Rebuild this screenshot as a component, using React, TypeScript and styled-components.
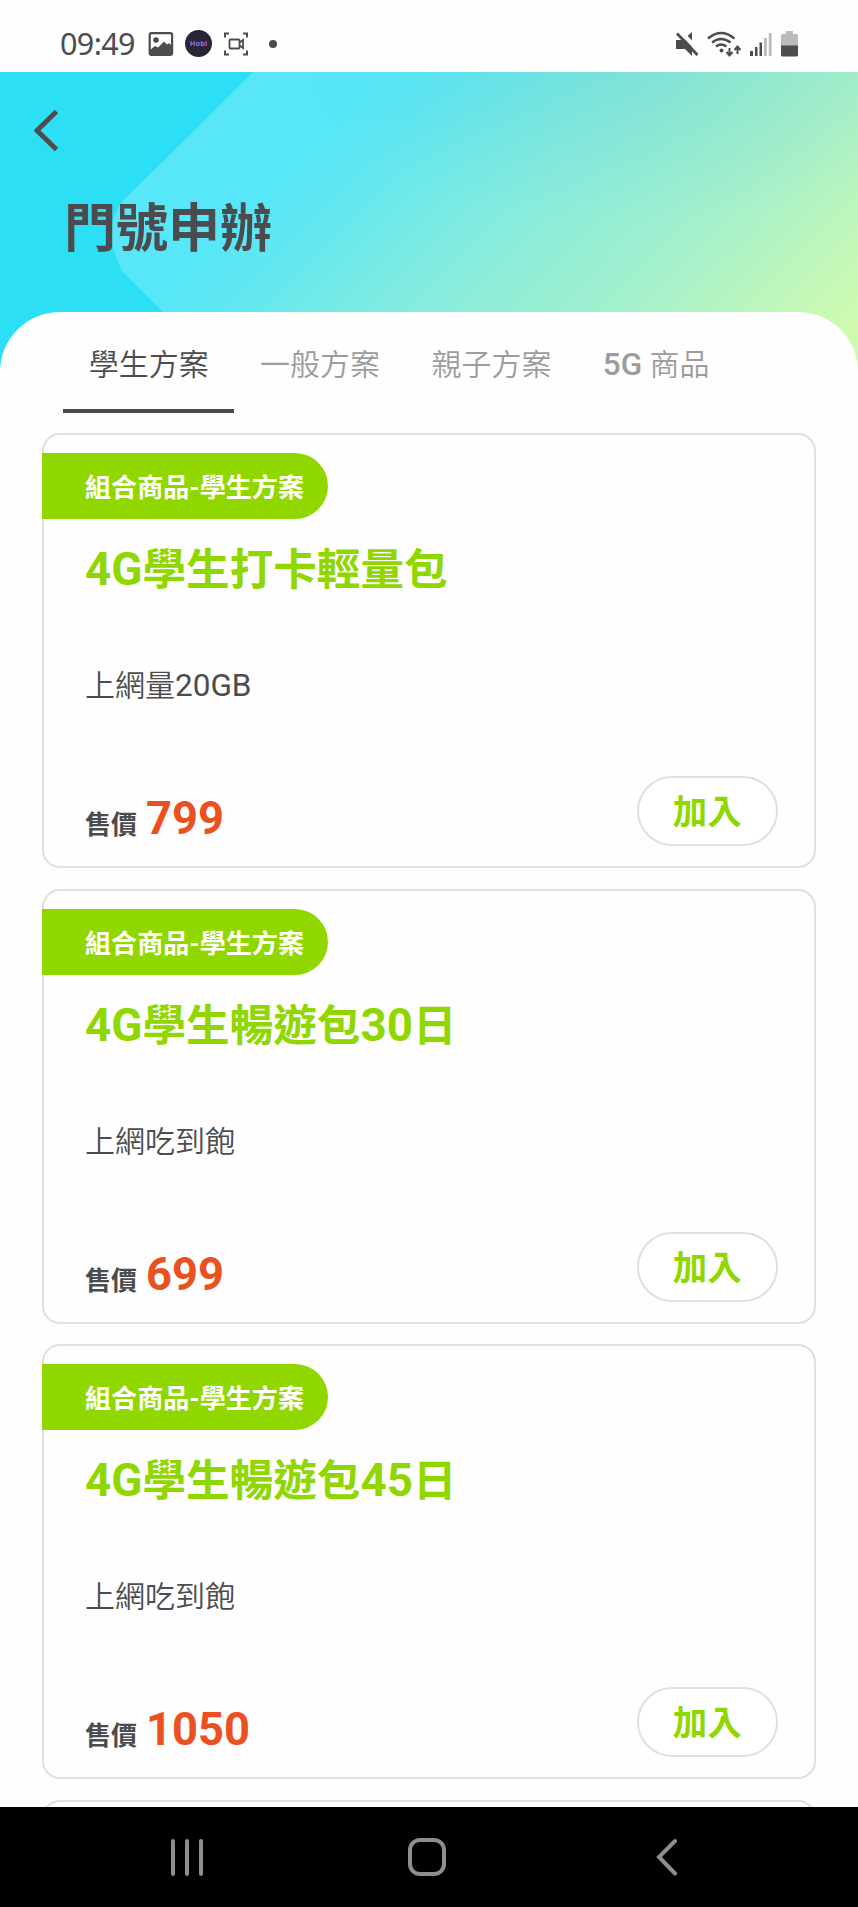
import React from "react";
import styled, { createGlobalStyle } from "styled-components";

const GlobalStyle = createGlobalStyle`
  * { box-sizing: border-box; }
  body { margin: 0; background: #fff; }
`;

const ink = "#4c4c4e";
const green = "#90d700";
const line = "#e0e0e0";

const Screen = styled.div`
  width: 858px;
  height: 1907px;
  display: flex;
  flex-direction: column;
  overflow: hidden;
  background: #fefefe;
  color: ${ink};
  font-family: Roboto, "Noto Sans CJK TC", sans-serif;
`;

const StatusBar = styled.div`
  height: 72px;
  flex: none;
  display: flex;
  align-items: center;
  justify-content: space-between;
  padding: 15px 60px 0 60px;
`;

const Clock = styled.span`
  width: 88px;
  margin-top: -2px;
  font: 400 30.5px/32px "Noto Sans", sans-serif;
  letter-spacing: -0.6px;
`;

const StatusGroup = styled.div<{ $gap?: number }>`
  display: flex;
  align-items: center;
  gap: ${(p) => p.$gap ?? 0}px;
`;

const AppBadge = styled.span`
  width: 27px;
  height: 27px;
  margin: 0 12px 0 11px;
  border-radius: 50%;
  display: grid;
  place-items: center;
  background: #262636;
  color: #a267e0;
  font: 700 7.5px/1 "Noto Sans", sans-serif;
`;

const Dot = styled.span`
  width: 8px;
  height: 8px;
  margin-left: 21px;
  border-radius: 50%;
  background: ${ink};
`;

const Hero = styled.header`
  position: relative;
  height: 310px;
  flex: none;
  padding: 37px 34px 0;
`;

const HeroArt = styled.svg`
  position: absolute;
  inset: 0;
`;

const BackButton = styled.button`
  position: relative;
  display: block;
  width: 26px;
  height: 43px;
  padding: 0;
  border: 0;
  background: none;
`;

const PageTitle = styled.h1`
  position: relative;
  margin: 40px 0 0 30px;
  font-size: 52px;
  line-height: 76px;
  font-weight: 700;
`;

const Sheet = styled.main`
  position: relative;
  flex: 1;
  min-height: 0;
  margin-top: -70px;
  padding: 0 42px;
  overflow: hidden;
  border-radius: 60px 60px 0 0;
  background: #fefefe;
`;

const Tabs = styled.nav`
  display: flex;
  height: 101px;
  padding-left: 21px;
`;

const Tab = styled.button<{ $active?: boolean }>`
  padding: 8px 25.7px 0;
  border: 0;
  border-bottom: 4px solid ${(p) => (p.$active ? ink : "transparent")};
  background: none;
  color: ${(p) => (p.$active ? ink : "#9c9c9c")};
  font: 350 30px/44px Roboto, "Noto Sans CJK TC", sans-serif;
  white-space: pre;
`;

const TabStrong = styled.span`
  font-size: 1.05em;
  font-weight: 500;
`;

const Latin = styled.span`
  font-size: 1.05em;
`;

const PlanList = styled.div`
  display: flex;
  flex-direction: column;
  gap: 20.5px;
  padding-top: 20.3px;
`;

const Card = styled.article`
  height: 435px;
  flex: none;
  display: flex;
  flex-direction: column;
  align-items: flex-start;
  padding: 18px 36px 20px 0;
  border: 2px solid ${line};
  border-radius: 18px;
`;

const Category = styled.span`
  height: 66px;
  margin-left: -2px;
  padding: 2px 24px 0 43px;
  border-radius: 0 33px 33px 0;
  background: ${green};
  color: #fff;
  font-size: 26.1px;
  font-weight: 700;
  line-height: 66px;
`;

const PlanName = styled.h2`
  margin: 21px 0 0 41px;
  color: ${green};
  font-size: 43.6px;
  line-height: 60px;
  font-weight: 700;
`;

const PlanDetail = styled.p`
  margin: 63px 0 0 41px;
  font-size: 30px;
  line-height: 44px;
  font-weight: 350;

  ${Latin} {
    font-weight: 400;
  }
`;

const CardFooter = styled.div`
  align-self: stretch;
  margin-top: auto;
  display: flex;
  align-items: flex-end;
  justify-content: space-between;
  padding-left: 41px;
`;

const Price = styled.div`
  display: flex;
  align-items: baseline;
  gap: 9px;
  margin-bottom: -6px;
  line-height: 54px;
  font-size: 26px;
  font-weight: 700;
`;

const Amount = styled.strong`
  color: #eb5020;
  font-size: 45.3px;
  font-weight: 700;
`;

const AddButton = styled.button`
  width: 141.5px;
  height: 70px;
  padding-top: 3px;
  border: 2.5px solid ${line};
  border-radius: 35px;
  background: #fff;
  color: ${green};
  font: 700 34.5px/50px Roboto, "Noto Sans CJK TC", sans-serif;
`;

const NavBar = styled.footer`
  height: 100px;
  flex: none;
  display: flex;
  align-items: center;
  padding-left: 170px;
  background: #000;
`;

const HomeIcon = styled.svg`
  margin: 0 210px 0 203.5px;
`;

const plans = [
  { name: "4G學生打卡輕量包", detail: "上網量20GB", price: "799" },
  { name: "4G學生暢遊包30日", detail: "上網吃到飽", price: "699" },
  { name: "4G學生暢遊包45日", detail: "上網吃到飽", price: "1050" },
];

/* Latin letters and digits sit slightly larger than the Chinese text around them. */
const MixedText = ({ text }: { text: string }) => (
  <>
    {text.split(/([A-Za-z0-9-]+)/).map((part, i) =>
      i % 2 ? <Latin key={i}>{part}</Latin> : part
    )}
  </>
);

const PictureIcon = () => (
  <svg width="26" height="26" viewBox="0 0 26 26">
    <rect x="1.7" y="2.2" width="22.4" height="21.6" rx="1.8" fill="none" stroke={ink} strokeWidth="2.2" />
    <circle cx="8" cy="9" r="2.8" fill={ink} />
    <path d="M2 19l5-4 3 1.500 6-6 3 3 2-1.500 3 3V24H2z" fill={ink} />
  </svg>
);

const RecordIcon = () => (
  <svg width="24" height="26" viewBox="0 0 24 26" fill="none" stroke={ink}>
    <path d="M1 6.500V2.500h4M19 2.500h4v4M23 19.500v4h-4M5 23.500H1v-4" strokeWidth="2" />
    <rect x="5.500" y="8.500" width="10" height="9" rx="1" strokeWidth="1.800" />
    <path d="M15.500 11.500l3.500-2.500v8l-3.500-2.500" strokeWidth="1.800" />
  </svg>
);

const MuteIcon = () => (
  <svg width="24" height="28" viewBox="0 0 24 28" fill={ink}>
    <path d="M1 10h7l9-8v24l-7-7H1z" />
    <path d="M4 0L22 19" stroke="#fefefe" strokeWidth="4.500" />
    <path d="M2 3.500L22.500 25" stroke={ink} strokeWidth="2.800" />
  </svg>
);

const WifiIcon = () => (
  <svg width="34" height="28" viewBox="0 0 34 28" fill="none" stroke={ink} strokeWidth="2.400">
    <path d="M1 8.500Q14 -2.500 27.500 8.500M5 12.500Q14 5.500 23.500 12.500M9 16.500Q14 12.500 19.500 16.500" />
    <circle cx="14.500" cy="20.500" r="2" fill={ink} stroke="none" />
    <path d="M22.500 18v7M19.500 22l3 3.500 3-3.500M30.500 24v-7M27.500 20l3-3.500 3 3.500" strokeWidth="2" />
  </svg>
);

const SignalIcon = () => (
  <svg width="23" height="28" viewBox="0 0 23 28">
    <path d="M0 21h3v5H0zM5 17h2.500v9H5zM9.500 12.500h2.500V26H9.500z" fill={ink} />
    <path d="M14 8h2.800v18H14zM18.800 3h2.800v23h-2.800z" fill="#bbb" />
  </svg>
);

const BatteryIcon = () => (
  <svg width="17" height="28" viewBox="0 0 17 28">
    <path d="M5 1h7v3h3.500a1.500 1.500 0 0 1 1.500 1.500V16H0V5.500A1.500 1.500 0 0 1 1.500 4H5z" fill="#bbb" />
    <path d="M0 15.500h17V25a1.500 1.500 0 0 1-1.500 1.500h-14A1.500 1.500 0 0 1 0 25z" fill={ink} />
  </svg>
);

export default function App() {
  return (
    <Screen>
      <GlobalStyle />
      <StatusBar>
        <StatusGroup>
          <Clock>09:49</Clock>
          <PictureIcon />
          <AppBadge>Hobi</AppBadge>
          <RecordIcon />
          <Dot />
        </StatusGroup>
        <StatusGroup $gap={8.5}>
          <MuteIcon />
          <WifiIcon />
          <SignalIcon />
          <BatteryIcon />
        </StatusGroup>
      </StatusBar>
      <Hero>
        <HeroArt width="858" height="310" viewBox="0 0 858 310">
          <defs>
            <linearGradient id="glow" gradientUnits="userSpaceOnUse" x1="360" y1="20" x2="720" y2="380">
              <stop offset="0" stopColor="#57e7f8" />
              <stop offset="0.1" stopColor="#5fe7f2" />
              <stop offset="0.35" stopColor="#83ebdf" />
              <stop offset="0.65" stopColor="#a2f0cd" />
              <stop offset="1" stopColor="#d0fab0" />
            </linearGradient>
            <radialGradient id="shade" gradientUnits="userSpaceOnUse" cx="0" cy="0" r="1" gradientTransform="translate(640 0) scale(340 150)">
              <stop offset="0" stopColor="#408090" stopOpacity="0.09" />
              <stop offset="1" stopColor="#408090" stopOpacity="0" />
            </radialGradient>
          </defs>
          <rect width="858" height="310" fill="#2ddff4" />
          <path d="M253 0L124 128Q100 154 122 199L163 240L234 310H858V0z" fill="url(#glow)" />
          <rect x="300" width="558" height="310" fill="url(#shade)" />
        </HeroArt>
        <BackButton aria-label="返回">
          <svg width="26" height="43" viewBox="0 0 26 43">
            <path d="M22.500 2.500L3 21.500l19.500 19" fill="none" stroke={ink} strokeWidth="4.800" />
          </svg>
        </BackButton>
        <PageTitle>門號申辦</PageTitle>
      </Hero>
      <Sheet>
        <Tabs>
          <Tab $active>學生方案</Tab>
          <Tab>一般方案</Tab>
          <Tab>親子方案</Tab>
          <Tab>
            <TabStrong>5G</TabStrong> 商品
          </Tab>
        </Tabs>
        <PlanList>
          {plans.map((plan) => (
            <Card key={plan.name}>
              <Category>組合商品-學生方案</Category>
              <PlanName>
                <MixedText text={plan.name} />
              </PlanName>
              <PlanDetail>
                <MixedText text={plan.detail} />
              </PlanDetail>
              <CardFooter>
                <Price>
                  售價<Amount>{plan.price}</Amount>
                </Price>
                <AddButton>加入</AddButton>
              </CardFooter>
            </Card>
          ))}
          <Card aria-hidden />
        </PlanList>
      </Sheet>
      <NavBar>
        <svg width="34" height="38" viewBox="0 0 34 38">
          <path d="M3 3v33M17 3v33M31 3v33" stroke="#8e8e8e" strokeWidth="4" strokeLinecap="round" />
        </svg>
        <HomeIcon width="38" height="40" viewBox="0 0 38 40">
          <rect x="2" y="3" width="34" height="34" rx="10" fill="none" stroke="#8e8e8e" strokeWidth="4" />
        </HomeIcon>
        <svg width="22" height="38" viewBox="0 0 22 38">
          <path d="M19 3L3 19l16 16.500" fill="none" stroke="#8e8e8e" strokeWidth="4" strokeLinecap="round" />
        </svg>
      </NavBar>
    </Screen>
  );
}
